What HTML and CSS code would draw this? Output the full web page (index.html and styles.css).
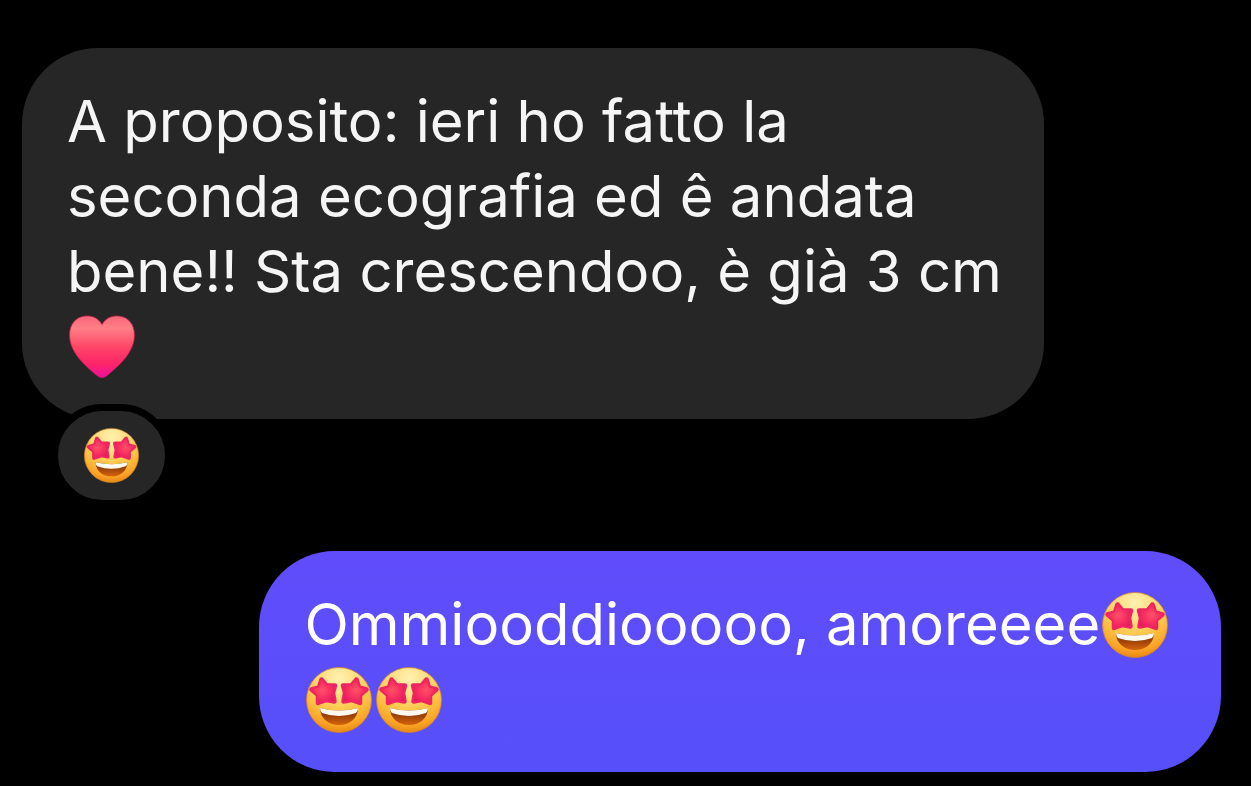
FILE: index.html
```html
<!DOCTYPE html>
<html lang="it">
<head>
<meta charset="utf-8">
<meta name="viewport" content="width=device-width, initial-scale=1">
<title>Chat</title>
<link rel="stylesheet" href="styles.css">
</head>
<body>
<svg class="defs" aria-hidden="true">
  <defs>
    <radialGradient id="skin" cx="50%" cy="16%" r="86%">
      <stop offset="0" stop-color="#fff0b0"/>
      <stop offset=".3" stop-color="#ffe083"/>
      <stop offset=".6" stop-color="#ffc445"/>
      <stop offset=".85" stop-color="#f9a325"/>
      <stop offset="1" stop-color="#e5820f"/>
    </radialGradient>
    <radialGradient id="star" cx="45%" cy="45%" r="60%">
      <stop offset="0" stop-color="#ff5068"/>
      <stop offset=".5" stop-color="#f83462"/>
      <stop offset="1" stop-color="#e81a60"/>
    </radialGradient>
    <linearGradient id="mouth" x1="0" y1="0" x2="0" y2="1">
      <stop offset="0" stop-color="#7c3708"/>
      <stop offset=".5" stop-color="#a04508"/>
      <stop offset="1" stop-color="#d8640c"/>
    </linearGradient>
    <linearGradient id="love" x1="0" y1="0" x2="0" y2="1">
      <stop offset="0" stop-color="#f9647a"/>
      <stop offset=".2" stop-color="#ff7f86"/>
      <stop offset=".5" stop-color="#ff4668"/>
      <stop offset=".78" stop-color="#fc2468"/>
      <stop offset="1" stop-color="#ee10a0"/>
    </linearGradient>
    <symbol id="star-struck" viewBox="0 0 66 66">
      <circle cx="33" cy="33" r="32.5" fill="url(#skin)" stroke="#d08433" stroke-width=".8"/>
      <path id="eye" d="M15.500 12.500L20.500 18.500L29 18.500L27 26L28.500 34.500L20.500 33L12 36L12 28L5.500 22.500L13 20.500Z" fill="url(#star)" stroke="#ee2560" stroke-width="4.500" stroke-linejoin="round"/>
      <path id="shine" d="M15.500 12.500L20.500 18.500L29 18.500L27 26L28.500 34.500L20.500 33L12 36L12 28L5.500 22.500L13 20.500Z" fill="url(#star)"/>
      <use href="#eye" transform="matrix(-1 0 0 1 66 0)"/>
      <use href="#shine" transform="matrix(-1 0 0 1 66 0)"/>
      <path d="M14 41Q33 46 52 41C52 51 44 58 33 58C22 58 14 51 14 41Z" fill="url(#mouth)"/>
      <path d="M14 41Q33 46 52 41Q52 44 50 46Q33 52 16 46Q14 44 14 41Z" fill="#fffaf0"/>
    </symbol>
    <symbol id="heart" viewBox="0 0 66 64">
      <path d="M33 9.500C29 2 22 .5 16 1C6 2 .5 10 .5 20C.5 37 15 50 28.500 61Q33 64.500 37.500 61C51 50 65.500 37 65.500 20C65.500 10 60 2 50 1C44 .5 37 2 33 9.500Z" fill="url(#love)" stroke="#b51d49" stroke-width=".8"/>
    </symbol>
  </defs>
</svg>
<main class="chat">
  <article class="message received">
    <p class="bubble">A proposito: ieri ho fatto la<br>seconda ecografia ed ê andata<br>bene!! Sta crescendoo, è già 3 cm<br><svg class="emoji" role="img" aria-label="Cuore"><use href="#heart"/></svg></p>
    <button class="reaction" type="button" aria-label="Reazione"><svg class="reaction-icon" aria-hidden="true"><use href="#star-struck"/></svg></button>
  </article>
  <article class="message sent">
    <p class="bubble">Ommiooddiooooo, amoreeee<svg class="emoji" role="img" aria-label="Occhi a stella"><use href="#star-struck"/></svg><br><svg class="emoji" role="img" aria-label="Occhi a stella"><use href="#star-struck"/></svg><svg class="emoji" role="img" aria-label="Occhi a stella"><use href="#star-struck"/></svg></p>
  </article>
</main>
</body>
</html>
```
FILE: styles.css
```css
body {
  margin: 0;
  background: #000;
  color: #f5f5f5;
  font-family: Inter, sans-serif;
  font-size: 58px;
  line-height: 75px;
}

.defs {
  position: absolute;
  width: 0;
  height: 0;
}

.chat {
  display: flex;
  flex-direction: column;
  gap: 44px;
  padding: 48px 30px 13px 22px;
}

.message {
  display: flex;
  flex-direction: column;
}

.received {
  align-items: flex-start;
}

.sent {
  align-items: flex-end;
}

.bubble {
  box-sizing: border-box;
  margin: 0;
  padding: 36px 40px 35px 45px;
  border-radius: 76px;
}

.received .bubble {
  width: 85.2%;
  background: #262626;
}

.sent .bubble {
  width: 80.2%;
  background: linear-gradient(#604cfa, #5650fa);
  color: #fff;
}

.emoji {
  width: 66px;
  height: 66px;
  margin: 0 2px;
  vertical-align: -13px;
}

.reaction {
  display: flex;
  margin: -15px 0 0 29px;
  padding: 17px 26px;
  border: 7px solid #000;
  border-radius: 52px;
  background: #262626;
}

.reaction-icon {
  width: 55px;
  height: 55px;
}
```
